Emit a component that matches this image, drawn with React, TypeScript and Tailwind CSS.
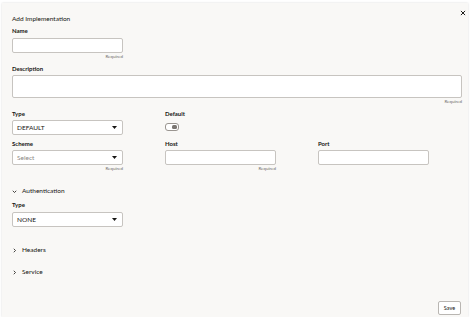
import React from "react";

const Caret = () => (
  <svg width="5" height="3" viewBox="0 0 5 3" className="shrink-0">
    <path d="M0 0h5L2.5 3z" fill="#161513" />
  </svg>
);

const Label = ({ children }: { children: React.ReactNode }) => (
  <div className="text-[6px] leading-[8px] font-bold text-[#161513]">{children}</div>
);

const Required = () => (
  <div className="text-right text-[4.5px] leading-[6px] text-[#6f6c69]">Required</div>
);

const Box = ({ className = "", children }: { className?: string; children?: React.ReactNode }) => (
  <div className={`bg-white border border-[#c7c4c0] rounded-[2px] ${className}`}>{children}</div>
);

const Select = ({ value, placeholder }: { value: string; placeholder?: boolean }) => (
  <Box className="h-[15px] flex items-center justify-between pl-[4px] pr-[5px]">
    <span className={`text-[6.5px] ${placeholder ? "text-[#8a8784]" : "text-[#161513]"}`}>{value}</span>
    <Caret />
  </Box>
);

const Section = ({ title, open }: { title: string; open?: boolean }) => (
  <div className="flex items-center gap-[5px] h-[10px] text-[6.5px] text-[#161513]">
    <svg width="5" height="5" viewBox="0 0 10 10" className="shrink-0">
      {open ? (
        <path d="M1.5 3.5L5 7l3.5-3.5" fill="none" stroke="#161513" strokeWidth="1.6" />
      ) : (
        <path d="M3.5 1.5L7 5 3.5 8.5" fill="none" stroke="#161513" strokeWidth="1.6" />
      )}
    </svg>
    <span>{title}</span>
  </div>
);

export default function App() {
  return (
    <div className="w-[474px] h-[317px] bg-white overflow-hidden" style={{ fontFamily: "Lato, 'Noto Sans', sans-serif" }}>
      <div className="relative ml-[2px] mt-[3px] w-[466px] h-[314px] bg-[#f9f8f6] shadow-[0_0_2px_rgba(0,0,0,0.15)] flex flex-col px-[10px] pt-[11px]">
        {/* close */}
        <svg width="6" height="6" viewBox="0 0 10 10" className="absolute left-[458px] top-[7px]">
          <path d="M1.5 1.5l7 7M8.5 1.5l-7 7" stroke="#161513" strokeWidth="1.6" />
        </svg>

        <div className="text-[6.5px] leading-[10px] text-[#161513]">Add Implementation</div>

        {/* Name */}
        <div className="mt-[3px] w-[111px]">
          <Label>Name</Label>
          <Box className="mt-[3px] h-[15px]" />
          <div className="mt-[1px]"><Required /></div>
        </div>

        {/* Description */}
        <div className="mt-[5px] w-[450px]">
          <Label>Description</Label>
          <Box className="mt-[2px] h-[23px]" />
          <div className="mt-[1px]"><Required /></div>
        </div>

        {/* Type / Default */}
        <div className="mt-[5px] grid grid-cols-[111px_111px_111px] gap-x-[42px]">
          <div>
            <Label>Type</Label>
            <div className="mt-[2px]"><Select value="DEFAULT" /></div>
          </div>
          <div>
            <Label>Default</Label>
            <div className="mt-[5px] w-[14px] h-[8px] rounded-[3px] border border-[#9a9590] bg-white flex justify-end p-[1px]">
              <div className="w-[5px] h-full rounded-[1.5px] bg-[#7a7571]" />
            </div>
          </div>
        </div>

        {/* Scheme / Host / Port */}
        <div className="mt-[5px] grid grid-cols-[111px_111px_111px] gap-x-[42px]">
          <div>
            <Label>Scheme</Label>
            <div className="mt-[2px]"><Select value="Select" placeholder /></div>
            <div className="mt-[1px]"><Required /></div>
          </div>
          <div>
            <Label>Host</Label>
            <Box className="mt-[2px] h-[15px]" />
            <div className="mt-[1px]"><Required /></div>
          </div>
          <div>
            <Label>Port</Label>
            <Box className="mt-[2px] h-[15px]" />
          </div>
        </div>

        <div className="mt-[14px]"><Section title="Authentication" open /></div>

        <div className="mt-[5px] w-[111px]">
          <Label>Type</Label>
          <div className="mt-[3px]"><Select value="NONE" /></div>
        </div>

        <div className="mt-[18px]"><Section title="Headers" /></div>
        <div className="mt-[12px]"><Section title="Service" /></div>

        <div className="mt-auto mb-[2px] flex justify-end -mr-[3px]">
          <button className="h-[14px] w-[23px] bg-white border border-[#b9b6b2] rounded-[2px] text-[5.5px] text-[#161513]">
            Save
          </button>
        </div>
      </div>
    </div>
  );
}
